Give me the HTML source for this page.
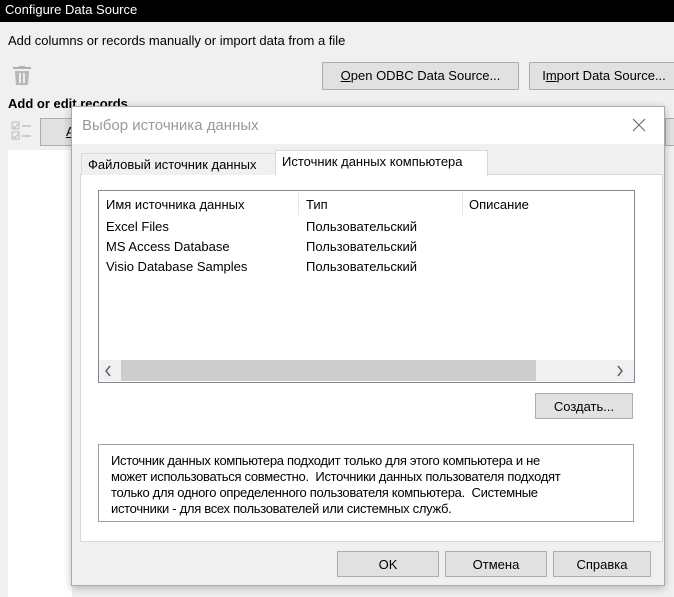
<!DOCTYPE html>
<html><head><meta charset="utf-8"><style>
*{box-sizing:border-box;margin:0;padding:0}
body{width:674px;height:597px;overflow:hidden;background:#f0f0f0;font-family:"Liberation Sans","DejaVu Sans",sans-serif;font-size:13px;color:#000;position:relative}
.a{position:absolute}
.btn{position:absolute;background:#e1e1e1;border:1px solid #adadad;text-align:center;line-height:25px}
.t{position:absolute;white-space:nowrap}
</style></head><body>
<div class="a" style="left:0;top:0;width:674px;height:22px;background:#000"></div>
<div class="t" style="left:5px;top:2px;color:#fff;font-size:13px">Configure Data Source</div>
<div class="t" style="left:8px;top:33px">Add columns or records manually or import data from a file</div>
<svg class="a" style="left:13px;top:66px" width="18" height="20"><rect x="0" y="1" width="18" height="2" fill="#b0b0b0"/><rect x="6" y="0" width="6" height="2" fill="#b0b0b0"/><path d="M2 5h14l-1 14H3z" fill="#b8b8b8"/><rect x="6" y="7" width="2" height="10" fill="#ececec"/><rect x="10" y="7" width="2" height="10" fill="#ececec"/></svg>
<div class="btn" style="left:322px;top:62px;width:197px;height:28px"><u>O</u>pen ODBC Data Source...</div>
<div class="btn" style="left:529px;top:62px;width:150px;height:28px">I<u>m</u>port Data Source...</div>
<div class="t" style="left:8px;top:96px;font-weight:bold">Add or edit records</div>
<svg class="a" style="left:11px;top:121px" width="22" height="20"><rect x="1" y="1" width="7" height="7" fill="none" stroke="#bbb"/><rect x="1" y="11" width="7" height="7" fill="none" stroke="#bbb"/><path d="M11 5h9M11 15h9" stroke="#aaa"/><path d="M2 5l2 2 3-4M2 15l2 2 3-4" stroke="#bbb" fill="none"/></svg>
<div class="btn" style="left:40px;top:118px;width:60px;height:28px;text-align:left;padding-left:25px"><u>A</u></div>
<div class="btn" style="left:665px;top:118px;width:20px;height:28px"></div>
<div class="a" style="left:8px;top:150px;width:64px;height:447px;background:#fff"></div>

<div class="a" style="left:71px;top:106px;width:594px;height:480px;background:#f0f0f0;border:1px solid #aaa;box-shadow:0 2px 8px rgba(0,0,0,.25)">
 <div class="a" style="left:0;top:0;width:592px;height:37px;background:#fff"></div>
 <div class="t" style="left:10px;top:10px;font-size:15px;color:#999">Выбор источника данных</div>
 <svg class="a" style="left:560px;top:11px" width="14" height="14"><path d="M1 1L13 13M13 1L1 13" stroke="#666" stroke-width="1"/></svg>
 <div class="a" style="left:8px;top:67px;width:583px;height:368px;background:#fff;border:1px solid #d9d9d9"></div>
 <div class="a" style="left:9px;top:46px;width:195px;height:22px;background:#f0f0f0;border:1px solid #d9d9d9;border-bottom:none"></div>
 <div class="t" style="left:16px;top:50px">Файловый источник данных</div>
 <div class="a" style="left:203px;top:43px;width:213px;height:26px;background:#fff;border:1px solid #d9d9d9;border-bottom:none"></div>
 <div class="t" style="left:210px;top:47px">Источник данных компьютера</div>

 <div class="a" style="left:26px;top:83px;width:537px;height:193px;background:#fff;border:1px solid #828790"></div>
 <div class="a" style="left:226px;top:86px;width:1px;height:22px;background:#e5e5e5"></div>
 <div class="a" style="left:390px;top:86px;width:1px;height:22px;background:#e5e5e5"></div>
 <div class="t" style="left:34px;top:90px">Имя источника данных</div>
 <div class="t" style="left:234px;top:90px">Тип</div>
 <div class="t" style="left:397px;top:90px">Описание</div>
 <div class="t" style="left:34px;top:112px">Excel Files</div><div class="t" style="left:234px;top:112px">Пользовательский</div>
 <div class="t" style="left:34px;top:132px">MS Access Database</div><div class="t" style="left:234px;top:132px">Пользовательский</div>
 <div class="t" style="left:34px;top:152px">Visio Database Samples</div><div class="t" style="left:234px;top:152px">Пользовательский</div>
 <div class="a" style="left:27px;top:253px;width:535px;height:21px;background:#f0f0f0"></div>
 <div class="a" style="left:49px;top:253px;width:415px;height:21px;background:#cdcdcd"></div>
 <svg class="a" style="left:32px;top:258px" width="8" height="12"><path d="M6 1L2 6l4 5" stroke="#606060" stroke-width="1.5" fill="none"/></svg>
 <svg class="a" style="left:544px;top:258px" width="8" height="12"><path d="M2 1l4 5-4 5" stroke="#606060" stroke-width="1.5" fill="none"/></svg>

 <div class="btn" style="left:463px;top:286px;width:98px;height:26px">Создать...</div>
 <div class="a" style="left:26px;top:337px;width:536px;height:78px;border:1px solid #a0a0a0;background:#fff"></div>
 <div class="a" style="left:39px;top:346px;width:520px;line-height:16px;white-space:nowrap;letter-spacing:-0.3px">Источник данных компьютера подходит только для этого компьютера и не<br>может использоваться совместно.&nbsp; Источники данных пользователя подходят<br>только для одного определенного пользователя компьютера.&nbsp; Системные<br>источники - для всех пользователей или системных служб.</div>

 <div class="btn" style="left:265px;top:444px;width:102px;height:26px">OK</div>
 <div class="btn" style="left:373px;top:444px;width:102px;height:26px">Отмена</div>
 <div class="btn" style="left:481px;top:444px;width:98px;height:26px">Справка</div>
</div>
</body></html>
